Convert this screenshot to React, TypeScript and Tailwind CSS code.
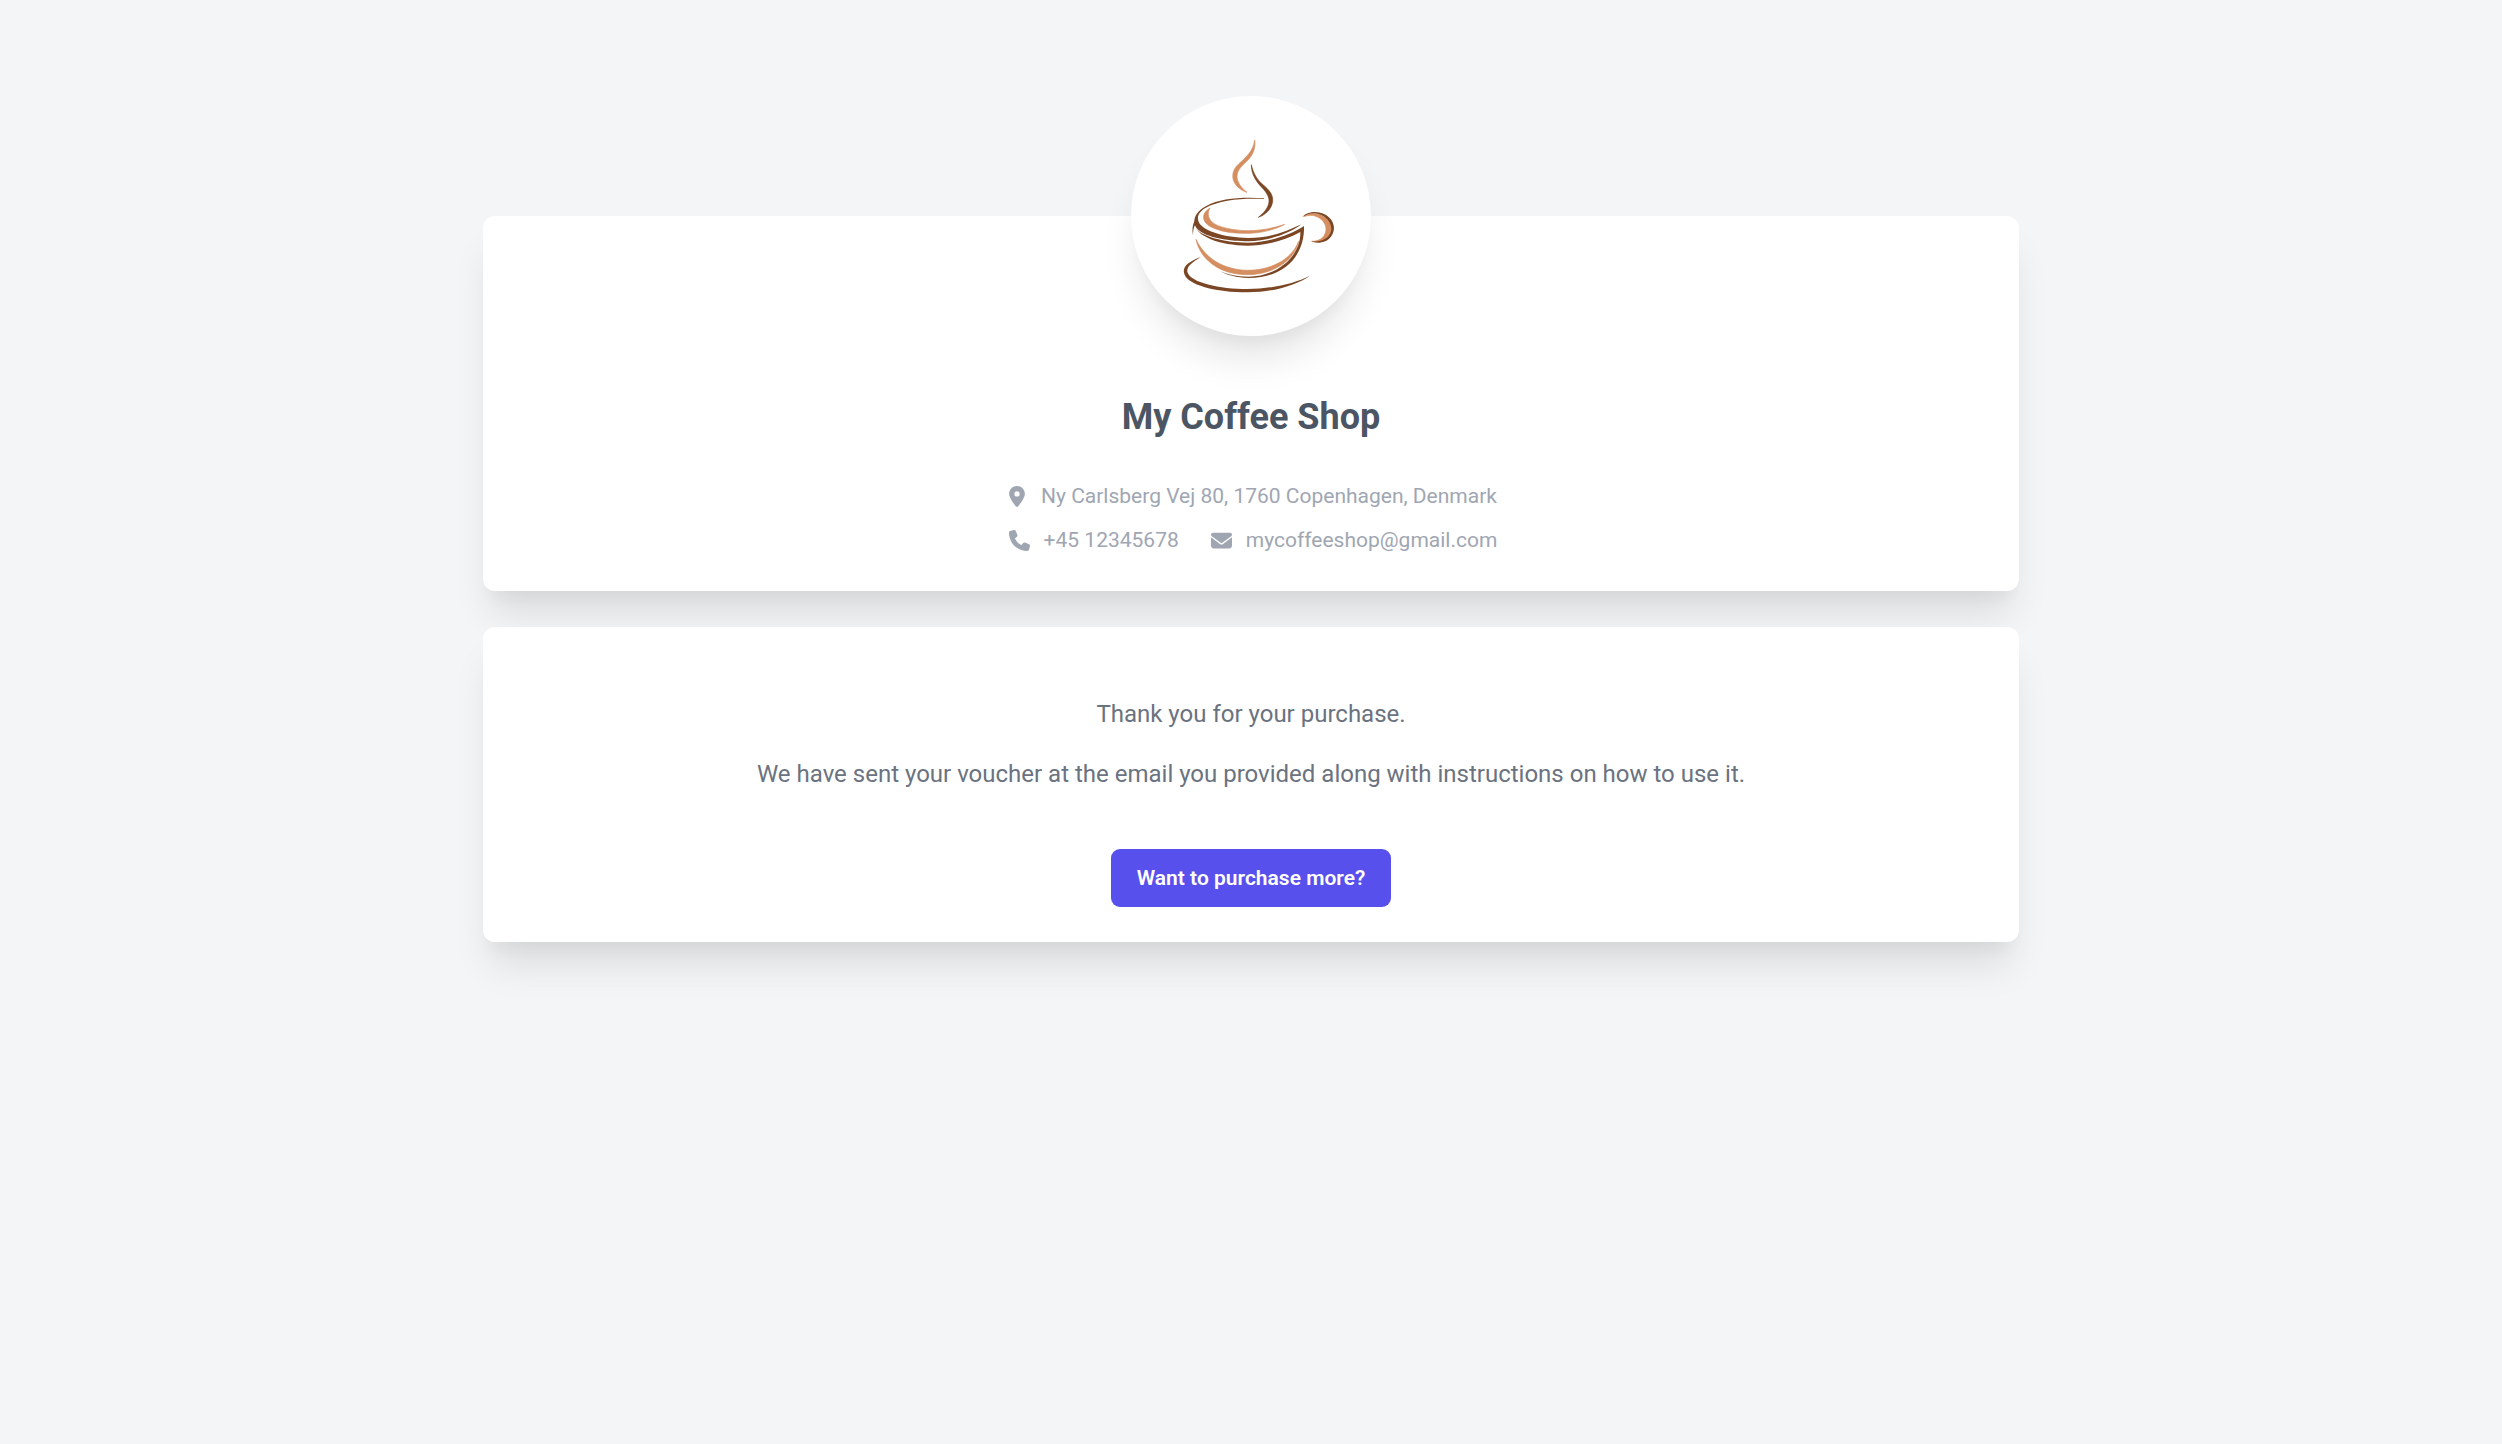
import type { ReactNode } from "react";
import { FaEnvelope, FaLocationDot, FaPhone } from "react-icons/fa6";

const shop = {
  name: "My Coffee Shop",
  address: "Ny Carlsberg Vej 80, 1760 Copenhagen, Denmark",
  phone: "+45 12345678",
  email: "mycoffeeshop@gmail.com",
};

function CoffeeLogo() {
  return (
    <svg className="w-full h-full" viewBox="63 48 720 720" role="img" aria-label={shop.name}>
      <g fill="#d58e60" stroke="#d58e60" strokeWidth={2} strokeLinejoin="round">
        <path d="M434 180C430 215 405 234 387 251C365 270 363 296 378 315C388 327 400 334 411 337C395 325 382 308 381 290C381 268 400 255 416 238C432 220 437 200 434 180Z" />
        <path d="M300 384C272 401 274 428 308 443C345 459 380 460 420 460C460 458 500 447 524 433C490 445 450 452 415 452C370 452 320 441 305 425C293 412 292 398 300 384Z" />
        <path d="M258 478C268 530 320 584 412 584C490 584 555 540 566 484C545 540 480 571 412 571C340 569 285 535 258 478Z" />
        <path d="M582 409C590 402 602 400 612 401C645 403 665 422 665 447C664 470 645 486 622 486L605 484C635 484 648 465 648 447C648 425 625 405 600 406Z" />
      </g>
      <g fill="#7b4623" strokeLinejoin="round">
        <path d="M424 254C424 285 440 305 455 322C470 338 478 350 477 365C475 385 460 400 445 412C465 405 486 388 488 362C489 342 475 328 460 315C440 298 430 280 424 254Z" stroke="#7b4623" strokeWidth={2} />
        <path d="M462 355C400 350 330 355 290 377C252 397 246 425 260 445C288 476 365 484 415 484C480 482 540 460 574 433C530 454 480 474 415 474C340 473 284 453 268 430C258 412 266 396 286 384C330 359 400 354 462 357Z" />
        <path d="M253 422C250 470 330 496 412 497C460 497 520 485 571 456C573 530 500 590 415 590C380 590 350 583 330 573C350 585 380 593 415 594C530 594 585 520 582 438C540 465 480 487 412 488C340 487 268 468 256 440Z" />
        <path d="M272 531C235 545 218 560 222 578C228 615 320 637 412 637C490 637 560 615 600 587C550 612 480 627 412 627C330 627 240 608 232 575C230 558 250 545 272 531Z" />
        <path d="M577 412C585 400 600 396 615 396C650 397 672 420 672 445C670 472 650 488 627 488C617 488 608 486 603 484C640 488 664 470 664 445C662 420 640 402 612 400C598 400 588 404 577 412Z" />
        <path d="M254 422C247 435 246 450 249 466C249 452 251 440 257 432Z" />
      </g>
    </svg>
  );
}

function Card({ children }: { children: ReactNode }) {
  return (
    <section className="w-full flex flex-col items-center px-9 pb-[35px] bg-white rounded-xl shadow-[0_30px_38px_-8px_rgba(0,0,0,0.1),0_15px_15px_-8px_rgba(0,0,0,0.04)]">
      {children}
    </section>
  );
}

export default function App() {
  return (
    <div className="min-h-screen bg-[#f4f5f7] px-6 pt-[216px] pb-24 font-['Roboto',sans-serif]">
      <main className="max-w-[1536px] mx-auto flex flex-col gap-9">
        <Card>
          <div className="w-60 h-60 -mt-[120px] rounded-full bg-white shadow-[0_30px_38px_-8px_rgba(0,0,0,0.1),0_15px_15px_-8px_rgba(0,0,0,0.04)]">
            <CoffeeLogo />
          </div>
          <h1 className="mt-[54px] text-4xl leading-[54px] font-bold text-[#4b5563]">{shop.name}</h1>
          <address className="mt-9 pl-1 flex flex-col items-center gap-3 text-[21px] leading-8 not-italic text-[#9fa6b2]">
            <div className="flex items-center gap-4">
              <FaLocationDot className="h-[21px] w-4" />
              <span>{shop.address}</span>
            </div>
            <div className="flex flex-wrap items-center justify-center gap-x-8">
              <a href="tel:+4512345678" className="flex items-center gap-[14px]">
                <FaPhone className="size-[21px]" />
                {shop.phone}
              </a>
              <a href="mailto:mycoffeeshop@gmail.com" className="flex items-center gap-[14px]">
                <FaEnvelope className="size-[21px]" />
                {shop.email}
              </a>
            </div>
          </address>
        </Card>

        <Card>
          <div className="pt-[72px] flex flex-col gap-[30px] text-center text-2xl leading-[30px] text-[#6b7280]">
            <p>Thank you for your purchase.</p>
            <p>We have sent your voucher at the email you provided along with instructions on how to use it.</p>
          </div>
          <button
            type="button"
            className="mt-[60px] px-[26px] py-[13px] rounded-[9px] bg-[#5850ec] hover:bg-[#6875f5] text-[21px] leading-8 font-semibold text-white transition-colors"
          >
            Want to purchase more?
          </button>
        </Card>
      </main>
    </div>
  );
}
